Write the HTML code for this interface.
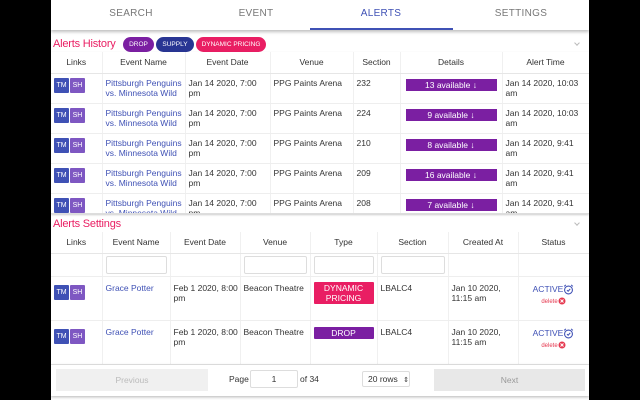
<!DOCTYPE html>
<html><head><meta charset="utf-8"><style>
*{box-sizing:border-box;margin:0;padding:0}
body{width:640px;height:400px;background:#000;font-family:"Liberation Sans",sans-serif;font-size:8.5px;color:#333;position:relative;overflow:hidden}
#app{position:absolute;left:51px;top:0;width:538px;height:400px;background:#fff;overflow:hidden}
.tabs{position:absolute;left:0;top:0;width:538px;height:30px;box-shadow:0 2px 3px rgba(0,0,0,.25);background:#fff;z-index:2}
.tab{position:absolute;top:8px;font-size:10px;color:#777;letter-spacing:.3px;text-align:center}
.ind{position:absolute;left:259px;top:28px;width:143px;height:2px;background:#3f51b5}
.h{position:absolute;left:2px;color:#e91e63;font-size:11px;letter-spacing:-.2px}
.pill{position:absolute;top:37px;height:15px;border-radius:8px;color:#fff;font-size:6.5px;line-height:15px;text-align:center}
table{border-collapse:collapse;table-layout:fixed;position:absolute;left:0}
td,th{font-weight:normal;vertical-align:top;border-right:1px solid #f0f0f0;padding:0 3px;line-height:10px;overflow:hidden;white-space:nowrap}
th{text-align:center;color:#333;padding-top:5px;height:21px;border-bottom:1px solid #e6e6e6}
tr.r td{border-bottom:1px solid #eee;height:30px;padding-top:4px}
a{color:#3f51b5;text-decoration:none}
.b{display:inline-block;width:15px;height:15px;color:#fff;font-size:7px;line-height:15px;text-align:center;border-radius:1px;margin-right:1px}
.tm{background:#3f51b5}.sh{background:#7e57c2}
.det{display:block;background:#7b1fa2;color:#fff;text-align:center;height:12px;line-height:12px;margin:1px 2px 0}
.box{position:absolute;left:0;width:538px;overflow:hidden;border-bottom:1px solid #ddd;box-shadow:0 1px 2px rgba(0,0,0,.2)}
.chev{position:absolute;right:10px;width:4px;height:4px;border-right:1px solid #bbb;border-bottom:1px solid #bbb;transform:rotate(45deg)}
input{border:1px solid #ddd;border-radius:2px;height:18px;width:100%;display:block}
.typ{display:block;color:#fff;text-align:center;line-height:10px;border-radius:1px}
.act{color:#3f51b5;font-size:8.5px}
.del{color:#e53950;font-size:6px}
svg{vertical-align:middle}
</style></head><body>
<div id="app">
<div class="tabs">
<div class="tab" style="left:25px;width:110px">SEARCH</div>
<div class="tab" style="left:150px;width:110px">EVENT</div>
<div class="tab" style="left:270px;width:120px;color:#3f51b5">ALERTS</div>
<div class="tab" style="left:410px;width:120px">SETTINGS</div>
<div class="ind"></div>
</div>
<div class="h" style="top:38px">Alerts History</div>
<div class="pill" style="left:72px;width:31px;background:#7b1fa2">DROP</div>
<div class="pill" style="left:105px;width:38px;background:#283593">SUPPLY</div>
<div class="pill" style="left:145px;width:70px;background:#e91e63">DYNAMIC PRICING</div>
<div class="chev" style="top:41px"></div>
<div class="box" style="top:52px;height:162px">
<table style="width:538px">
<colgroup><col style="width:51px"><col style="width:83px"><col style="width:85px"><col style="width:83px"><col style="width:47px"><col style="width:102px"><col style="width:87px"></colgroup>
<tr><th>Links</th><th>Event Name</th><th>Event Date</th><th>Venue</th><th>Section</th><th>Details</th><th>Alert Time</th></tr>
<tr class="r"><td><span class="b tm">TM</span><span class="b sh">SH</span></td><td><a>Pittsburgh Penguins<br>vs. Minnesota Wild</a></td><td>Jan 14 2020, 7:00<br>pm</td><td>PPG Paints Arena</td><td>232</td><td><span class="det">13 available ↓</span></td><td>Jan 14 2020, 10:03<br>am</td></tr>
<tr class="r"><td><span class="b tm">TM</span><span class="b sh">SH</span></td><td><a>Pittsburgh Penguins<br>vs. Minnesota Wild</a></td><td>Jan 14 2020, 7:00<br>pm</td><td>PPG Paints Arena</td><td>224</td><td><span class="det">9 available ↓</span></td><td>Jan 14 2020, 10:03<br>am</td></tr>
<tr class="r"><td><span class="b tm">TM</span><span class="b sh">SH</span></td><td><a>Pittsburgh Penguins<br>vs. Minnesota Wild</a></td><td>Jan 14 2020, 7:00<br>pm</td><td>PPG Paints Arena</td><td>210</td><td><span class="det">8 available ↓</span></td><td>Jan 14 2020, 9:41<br>am</td></tr>
<tr class="r"><td><span class="b tm">TM</span><span class="b sh">SH</span></td><td><a>Pittsburgh Penguins<br>vs. Minnesota Wild</a></td><td>Jan 14 2020, 7:00<br>pm</td><td>PPG Paints Arena</td><td>209</td><td><span class="det">16 available ↓</span></td><td>Jan 14 2020, 9:41<br>am</td></tr>
<tr class="r"><td><span class="b tm">TM</span><span class="b sh">SH</span></td><td><a>Pittsburgh Penguins<br>vs. Minnesota Wild</a></td><td>Jan 14 2020, 7:00<br>pm</td><td>PPG Paints Arena</td><td>208</td><td><span class="det">7 available ↓</span></td><td>Jan 14 2020, 9:41<br>am</td></tr>
</table></div>
<div class="h" style="top:218px">Alerts Settings</div>
<div class="chev" style="top:221px"></div>
<div class="box" style="top:232px;height:133px;box-shadow:none;border-bottom:1px solid #e6e6e6">
<table style="width:538px">
<colgroup><col style="width:51px"><col style="width:68px"><col style="width:70px"><col style="width:70px"><col style="width:67px"><col style="width:71px"><col style="width:70px"><col style="width:71px"></colgroup>
<tr><th style="height:19px">Links</th><th>Event Name</th><th>Event Date</th><th>Venue</th><th>Type</th><th>Section</th><th>Created At</th><th>Status</th></tr>
<tr><td style="height:23px;border-bottom:1px solid #eee"></td><td style="padding-top:2px;border-bottom:1px solid #eee"><input></td><td style="border-bottom:1px solid #eee"></td><td style="padding-top:2px;border-bottom:1px solid #eee"><input></td><td style="padding-top:2px;border-bottom:1px solid #eee"><input></td><td style="padding-top:2px;border-bottom:1px solid #eee"><input></td><td style="border-bottom:1px solid #eee"></td><td style="border-bottom:1px solid #eee"></td></tr>
<tr class="r"><td style="height:44px;padding-top:8px"><span class="b tm">TM</span><span class="b sh">SH</span></td><td style="padding-top:6px"><a>Grace Potter</a></td><td style="padding-top:6px">Feb 1 2020, 8:00<br>pm</td><td style="padding-top:6px">Beacon Theatre</td><td style="padding-top:6px"><span class="typ" style="background:#e91e63;padding:1px 0;margin-top:-1px">DYNAMIC<br>PRICING</span></td><td style="padding-top:6px">LBALC4</td><td style="padding-top:6px">Jan 10 2020,<br>11:15 am</td><td style="text-align:center;padding-top:7px"><span class="act">ACTIVE</span><svg width="11" height="11" viewBox="0 0 12 12"><circle cx="6" cy="6.5" r="4.3" fill="none" stroke="#3f51b5" stroke-width="1.2"/><path d="M4.3 6.7l1.3 1.2 2.3-2.6M1.2 2.6l2-1.6M10.8 2.6l-2-1.6" fill="none" stroke="#3f51b5" stroke-width="1.1"/></svg><br><span class="del">delete</span><svg width="8" height="8" viewBox="0 0 8 8"><circle cx="4" cy="4" r="3.5" fill="#e53950"/><path d="M2.5 2.5l3 3M5.5 2.5l-3 3" stroke="#fff" stroke-width="1"/></svg></td></tr>
<tr class="r"><td style="height:44px;padding-top:8px"><span class="b tm">TM</span><span class="b sh">SH</span></td><td style="padding-top:6px"><a>Grace Potter</a></td><td style="padding-top:6px">Feb 1 2020, 8:00<br>pm</td><td style="padding-top:6px">Beacon Theatre</td><td style="padding-top:6px"><span class="typ" style="background:#7b1fa2;height:12px;line-height:12px">DROP</span></td><td style="padding-top:6px">LBALC4</td><td style="padding-top:6px">Jan 10 2020,<br>11:15 am</td><td style="text-align:center;padding-top:7px"><span class="act">ACTIVE</span><svg width="11" height="11" viewBox="0 0 12 12"><circle cx="6" cy="6.5" r="4.3" fill="none" stroke="#3f51b5" stroke-width="1.2"/><path d="M4.3 6.7l1.3 1.2 2.3-2.6M1.2 2.6l2-1.6M10.8 2.6l-2-1.6" fill="none" stroke="#3f51b5" stroke-width="1.1"/></svg><br><span class="del">delete</span><svg width="8" height="8" viewBox="0 0 8 8"><circle cx="4" cy="4" r="3.5" fill="#e53950"/><path d="M2.5 2.5l3 3M5.5 2.5l-3 3" stroke="#fff" stroke-width="1"/></svg></td></tr>
</table></div>
<div style="position:absolute;left:0;top:365px;width:538px;height:31px;box-shadow:0 1px 3px rgba(0,0,0,.3);background:#fff">
<div style="position:absolute;left:5px;top:4px;width:152px;height:22px;background:#f0f0f0;color:#bbb;text-align:center;line-height:22px">Previous</div>
<div style="position:absolute;left:178px;top:9px">Page</div>
<div style="position:absolute;left:199px;top:5px;width:48px;height:18px;border:1px solid #ddd;border-radius:2px;text-align:center;line-height:16px">1</div>
<div style="position:absolute;left:249px;top:9px">of 34</div>
<div style="position:absolute;left:311px;top:6px;width:48px;height:16px;border:1px solid #ddd;border-radius:2px;padding-left:5px;line-height:14px">20 rows <span style="font-size:7px;margin-left:3px">⇕</span></div>
<div style="position:absolute;left:383px;top:4px;width:151px;height:22px;background:#e8e8e8;color:#999;text-align:center;line-height:22px">Next</div>
</div>
</div>
</body></html>
